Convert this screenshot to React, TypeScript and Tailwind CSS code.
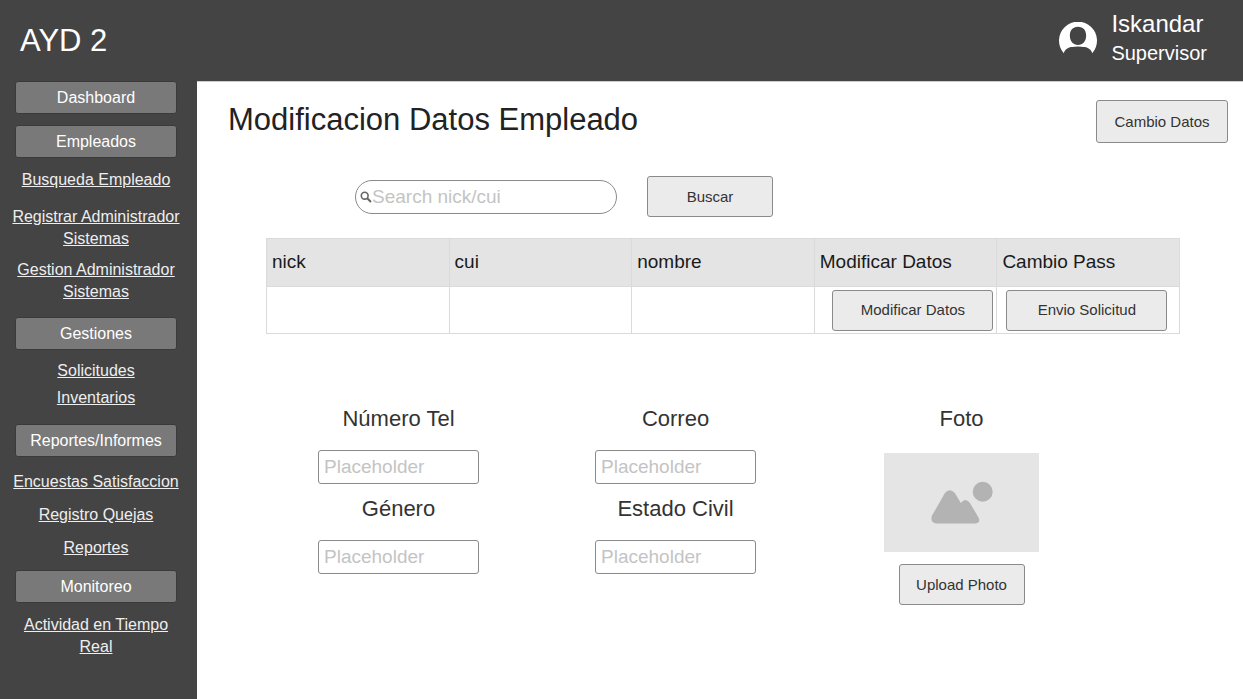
type NavLink = { label: string; gap: string };
type NavSection = { title: string; gap: string; links: NavLink[] };

const sections: NavSection[] = [
  { title: "Dashboard", gap: "", links: [] },
  {
    title: "Empleados",
    gap: "mt-[11px]",
    links: [
      { label: "Busqueda Empleado", gap: "mt-[11px]" },
      { label: "Registrar Administrador Sistemas", gap: "mt-[15px]" },
      { label: "Gestion Administrador Sistemas", gap: "mt-[9px]" },
    ],
  },
  {
    title: "Gestiones",
    gap: "mt-[14px]",
    links: [
      { label: "Solicitudes", gap: "mt-[10px]" },
      { label: "Inventarios", gap: "mt-[5px]" },
    ],
  },
  {
    title: "Reportes/Informes",
    gap: "mt-[15px]",
    links: [
      { label: "Encuestas Satisfaccion", gap: "mt-[14px]" },
      { label: "Registro Quejas", gap: "mt-[11px]" },
      { label: "Reportes", gap: "mt-[11px]" },
    ],
  },
  {
    title: "Monitoreo",
    gap: "mt-[11px]",
    links: [{ label: "Actividad en Tiempo Real", gap: "mt-[11px]" }],
  },
];

const buttonLook =
  "rounded-[3px] border border-[#8a8a8a] bg-[#ebebeb] text-[15px] leading-[20px] text-[#333333]";

function UserIcon() {
  return (
    <svg viewBox="59 65 112 112" className="h-[38px] w-[38px]" aria-hidden="true">
      <path
        fill="#ffffff"
        fillRule="evenodd"
        d="M73 157 A56 56 0 1 1 157 157 C153 146 144 139 132 139 C122 137 108 137 98 139 C86 139 77 146 73 157 Z M115 79 C99 79 91 90 91 105 C91 122 101 133 115 133 C129 133 139 122 139 105 C139 90 131 79 115 79 Z"
      />
    </svg>
  );
}

function SearchIcon() {
  return (
    <svg viewBox="0 0 12 12" className="h-[12px] w-[12px] shrink-0" fill="none" stroke="#666666" aria-hidden="true">
      <circle cx="4.7" cy="4.7" r="3.4" strokeWidth="1.6" />
      <path d="M7.2 7.2 L11 11" strokeWidth="2" />
    </svg>
  );
}

function PictureIcon() {
  return (
    <svg viewBox="181 122 187 129" className="h-[43px] w-[62px]" fill="#b3b3b3" aria-hidden="true">
      <circle cx="337" cy="154" r="30" />
      <path d="M184 226 L223 158 Q237 141 253 158 L271 188 Q284 171 298 187 L325 233 Q331 248 315 250 L198 250 Q177 247 184 226 Z" />
    </svg>
  );
}

function Field({ id, label }: { id: string; label: string }) {
  return (
    <div className="flex flex-col items-center">
      <label htmlFor={id} className="text-[22px] leading-[30px] text-[#333333]">
        {label}
      </label>
      <input
        id={id}
        type="text"
        placeholder="Placeholder"
        className="mt-[16px] h-[34px] w-[161px] rounded-[3px] border border-[#8a8a8a] bg-white px-[5px] text-[19px] text-[#333333] placeholder:text-[#c4c4c4]"
      />
    </div>
  );
}

export default function App() {
  return (
    <div className="flex min-h-screen flex-col bg-[#444444] font-['Liberation_Sans',Arial,sans-serif]">
      <header className="flex h-[81px] items-center justify-between pr-[36px] pl-[20px] text-white">
        <div className="text-[31px] leading-[40px]">AYD 2</div>
        <div className="flex items-center gap-[14px]">
          <UserIcon />
          <div className="pb-[6px]">
            <div className="text-[24px] leading-[30px]">Iskandar</div>
            <div className="text-[20px] leading-[28px]">Supervisor</div>
          </div>
        </div>
      </header>

      <div className="flex flex-1">
        <nav className="w-[197px] shrink-0 pr-[5px] text-center text-[16px] leading-[22px]">
          {sections.map((section) => (
            <div key={section.title} className={`flex flex-col items-center ${section.gap}`}>
              <button
                type="button"
                className="h-[33px] w-[162px] rounded-[3px] border border-[#3a3a3a] bg-[#797979] text-white"
              >
                {section.title}
              </button>
              {section.links.map((link) => (
                <a key={link.label} href="#" className={`max-w-[176px] text-[#eeeeee] underline ${link.gap}`}>
                  {link.label}
                </a>
              ))}
            </div>
          ))}
        </nav>

        <main className="flex-1 border-t border-[#cccccc] bg-white">
          <div className="flex items-start justify-between pt-[18px] pr-[15px] pl-[31px]">
            <h1 className="text-[31px] leading-[40px] text-[#222222]">Modificacion Datos Empleado</h1>
            <button type="button" className={`h-[43px] w-[132px] ${buttonLook}`}>
              Cambio Datos
            </button>
          </div>

          <div className="mt-[33px] pr-[63px] pl-[69px]">
            <form className="flex items-center gap-[30px] pl-[89px]" onSubmit={(e) => e.preventDefault()}>
              <label className="flex h-[34px] w-[262px] items-center rounded-full border border-[#8a8a8a] bg-white pl-[4px]">
                <SearchIcon />
                <input
                  type="search"
                  aria-label="Search nick/cui"
                  placeholder="Search nick/cui"
                  className="w-full min-w-0 bg-transparent pr-[12px] text-[19px] leading-[24px] text-[#333333] outline-none placeholder:text-[#c4c4c4]"
                />
              </label>
              <button type="button" className={`h-[41px] w-[126px] ${buttonLook}`}>
                Buscar
              </button>
            </form>

            <table className="mt-[21px] w-full table-fixed border-collapse text-left">
              <thead>
                <tr className="h-[48px] bg-[#e4e4e4] text-[19px] text-[#1a1a1a]">
                  {["nick", "cui", "nombre", "Modificar Datos", "Cambio Pass"].map((name) => (
                    <th key={name} className="border border-[#dadada] px-[5px] font-normal whitespace-nowrap">
                      {name}
                    </th>
                  ))}
                </tr>
              </thead>
              <tbody>
                <tr className="h-[47px]">
                  <td className="border border-[#dadada]" />
                  <td className="border border-[#dadada]" />
                  <td className="border border-[#dadada]" />
                  <td className="border border-[#dadada] pr-[3px]">
                    <button type="button" className={`ml-auto block h-[41px] w-[161px] ${buttonLook}`}>
                      Modificar Datos
                    </button>
                  </td>
                  <td className="border border-[#dadada] pl-[9px]">
                    <button type="button" className={`block h-[41px] w-[161px] ${buttonLook}`}>
                      Envio Solicitud
                    </button>
                  </td>
                </tr>
              </tbody>
            </table>

            <form
              className="mt-[70px] grid grid-cols-[265fr_289fr_283fr] items-start pr-[77px]"
              onSubmit={(e) => e.preventDefault()}
            >
              <div className="flex flex-col gap-[10px]">
                <Field id="telefono" label="Número Tel" />
                <Field id="genero" label="Género" />
              </div>
              <div className="flex flex-col gap-[10px]">
                <Field id="correo" label="Correo" />
                <Field id="estado-civil" label="Estado Civil" />
              </div>
              <div className="flex flex-col items-center">
                <h2 className="text-[22px] leading-[30px] text-[#333333]">Foto</h2>
                <div className="mt-[19px] flex h-[99px] w-[155px] items-center justify-center bg-[#e5e5e5]">
                  <PictureIcon />
                </div>
                <button type="button" className={`mt-[12px] h-[41px] w-[126px] ${buttonLook}`}>
                  Upload Photo
                </button>
              </div>
            </form>
          </div>
        </main>
      </div>
    </div>
  );
}
